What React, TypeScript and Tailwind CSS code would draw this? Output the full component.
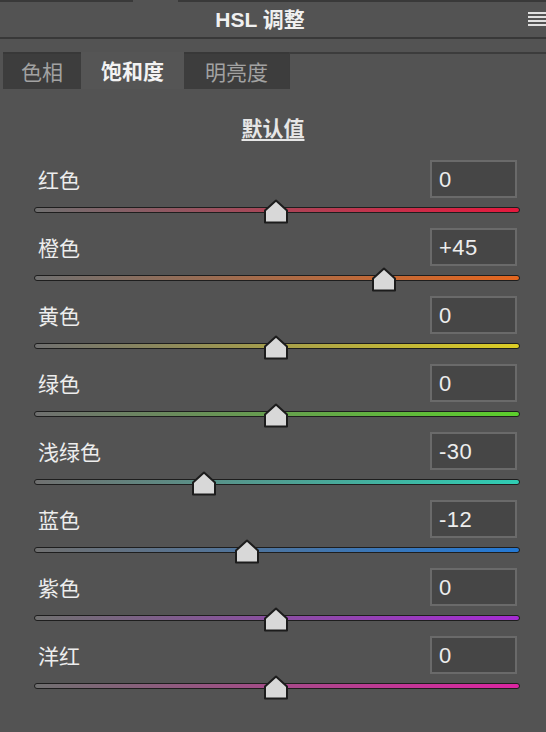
import React from "react";

type Row = { label: string; value: number; display: string; grad: string };

const rows: Row[] = [
  { label: "红色", value: 0, display: "0", grad: "bg-[linear-gradient(to_right,#707070,#e5193d)]" },
  { label: "橙色", value: 45, display: "+45", grad: "bg-[linear-gradient(to_right,#707070,#e4661f)]" },
  { label: "黄色", value: 0, display: "0", grad: "bg-[linear-gradient(to_right,#707070,#dccd25)]" },
  { label: "绿色", value: 0, display: "0", grad: "bg-[linear-gradient(to_right,#707070,#5ccf2c)]" },
  { label: "浅绿色", value: -30, display: "-30", grad: "bg-[linear-gradient(to_right,#707070,#2fcdb4)]" },
  { label: "蓝色", value: -12, display: "-12", grad: "bg-[linear-gradient(to_right,#707070,#2479d5)]" },
  { label: "紫色", value: 0, display: "0", grad: "bg-[linear-gradient(to_right,#707070,#a52cd3)]" },
  { label: "洋红", value: 0, display: "0", grad: "bg-[linear-gradient(to_right,#707070,#dc25a2)]" },
];

function Thumb() {
  return (
    <svg width="26" height="25" viewBox="0 0 26 25">
      <polygon
        points="13,1.5 24,11.5 24,23.5 2,23.5 2,11.5"
        fill="#d8d8d8"
        stroke="#1c1c1c"
        strokeWidth="2"
        strokeLinejoin="round"
      />
    </svg>
  );
}

function SliderRow({ row }: { row: Row }) {
  const center = 242 + row.value * 2.4;
  return (
    <div className="flex flex-col h-[68px]">
      <div className="flex items-center justify-between h-[38px] pl-[38px] pr-[29px]">
        <span className="text-[21px] text-[#ededed] leading-none">{row.label}</span>
        <div className="w-[87px] h-[38px] bg-[#464646] border-2 border-[#6a6a6a] flex items-center pl-[7px] text-[22px] tracking-[0.5px] text-[#ededed] font-['Liberation_Sans','Noto_Sans_CJK_SC',sans-serif]">
          {row.display}
        </div>
      </div>
      <div className="relative mt-[9px] ml-[34px] w-[486px] h-[6px]">
        <div className={`w-full h-full rounded-full border border-[#1e1e1e] ${row.grad}`} />
        <div className="absolute top-[-8px]" style={{ left: center - 13 }}>
          <Thumb />
        </div>
      </div>
    </div>
  );
}

export default function App() {
  return (
    <div className="w-[546px] h-[732px] bg-[#535353] overflow-hidden font-['Noto_Sans_CJK_SC',sans-serif] select-none">
      <div className="flex h-[2px]">
        <div className="w-[133px] bg-[#393939]" />
        <div className="w-[45px]" />
        <div className="flex-1 bg-[#393939]" />
      </div>
      <div className="relative h-[35px] flex items-center justify-center pr-[26px]">
        <span className="text-[21px] font-bold text-[#f0f0f0] font-['Liberation_Sans','Noto_Sans_CJK_SC',sans-serif]">
          HSL 调整
        </span>
        <div className="absolute right-0 top-[10px] w-[18px] flex flex-col gap-[2px]">
          <div className="h-[2px] bg-[#e0e0e0]" />
          <div className="h-[2px] bg-[#e0e0e0]" />
          <div className="h-[2px] bg-[#e0e0e0]" />
          <div className="h-[2px] bg-[#e0e0e0]" />
        </div>
      </div>
      <div className="h-[2px] bg-[#383838]" />
      <div className="h-[13px]" />
      <div className="flex h-[37px] pl-[3px]">
        <div className="w-[78px] bg-[#3d3d3d] border-t-2 border-[#383838] flex items-center justify-center text-[21px] text-[#a2a2a2]">
          色相
        </div>
        <div className="w-[103px] bg-[#555555] flex items-center justify-center text-[21px] text-[#f2f2f2] font-semibold">
          饱和度
        </div>
        <div className="w-[105px] bg-[#3d3d3d] border-t-2 border-[#383838] flex items-center justify-center text-[21px] text-[#a2a2a2]">
          明亮度
        </div>
        <div className="flex-1 border-t-2 border-l border-[#3c3c3c]" />
      </div>
      <div className="h-[71px] flex justify-center pt-[26px]">
        <span className="text-[21px] leading-[24px] font-semibold text-[#e6e6e6] underline underline-offset-[3px] decoration-[1.5px]">
          默认值
        </span>
      </div>
      <div className="flex flex-col">
        {rows.map((r) => (
          <SliderRow key={r.label} row={r} />
        ))}
      </div>
    </div>
  );
}
